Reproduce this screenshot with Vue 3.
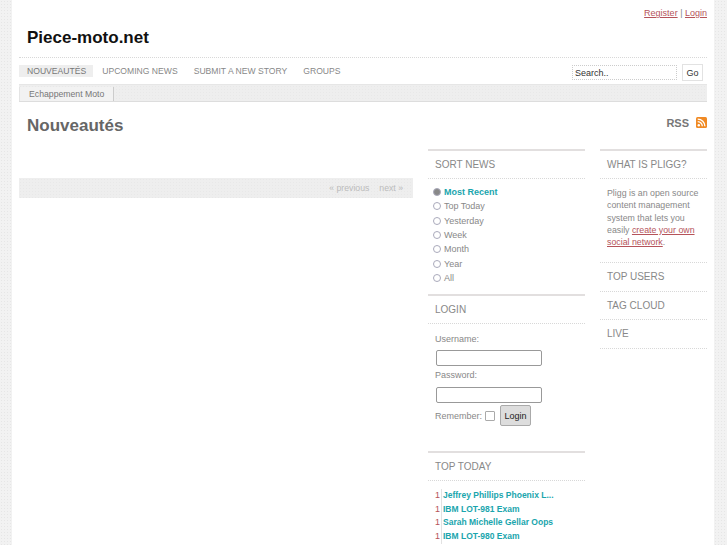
<script setup>
const sorts = ['Top Today', 'Yesterday', 'Week', 'Month', 'Year', 'All']
const nav = ['Upcoming News', 'Submit a new story', 'Groups']
const top = ['Jeffrey Phillips Phoenix L...', 'IBM LOT-981 Exam', 'Sarah Michelle Gellar Oops', 'IBM LOT-980 Exam']
</script>

<template>
  <div class="page">
    <div class="header">
      <div class="userlinks"><a>Register</a> | <a>Login</a></div>
      <div class="logo">Piece-moto.net</div>
    </div>

    <div class="nav">
      <span class="nav__item nav__item--on">Nouveautés</span>
      <span class="nav__item" v-for="n in nav" :key="n">{{ n }}</span>
      <div class="search">
        <input class="search__field" type="text" value="Search.." />
        <button class="search__btn">Go</button>
      </div>
    </div>

    <div class="subnav"><span class="subnav__tab">Echappement Moto</span></div>

    <div class="title">
      <h1>Nouveautés</h1>
      <div class="rss">
        RSS
        <svg width="11" height="11" viewBox="0 0 11 11">
          <rect width="11" height="11" rx="1.5" fill="#f08a24" />
          <circle cx="2.8" cy="8.2" r="1.2" fill="#fff" />
          <path d="M1.7 4.7a4.6 4.6 0 0 1 4.6 4.6M1.7 2.1a7.2 7.2 0 0 1 7.2 7.2" fill="none" stroke="#fff" stroke-width="1.3" />
        </svg>
      </div>
    </div>

    <div class="columns">
      <div class="main">
        <div class="pager"><span>« previous</span><span>next »</span></div>
      </div>

      <div class="side">
        <div class="box">
          <h2>Sort News</h2>
          <ul class="sort">
            <li class="sort__on"><i class="radio radio--on"></i>Most Recent</li>
            <li v-for="s in sorts" :key="s"><i class="radio"></i>{{ s }}</li>
          </ul>
        </div>

        <div class="box">
          <h2>Login</h2>
          <div class="login">
            <label>Username:</label>
            <input class="login__field login__field--first" type="text" />
            <label>Password:</label>
            <input class="login__field" type="password" />
            <div class="login__row">
              <label>Remember:</label>
              <i class="check"></i>
              <button class="login__btn">Login</button>
            </div>
          </div>
        </div>

        <div class="box">
          <h2>Top Today</h2>
          <ul class="top">
            <li v-for="t in top" :key="t"><span class="top__num">1</span><a>{{ t }}</a></li>
          </ul>
        </div>
      </div>

      <div class="side">
        <div class="box">
          <h2>What is Pligg?</h2>
          <p class="about">Pligg is an open source content management system that lets you easily <a>create your own social network</a>.</p>
        </div>
        <div class="box box--flat"><h2>Top Users</h2></div>
        <div class="box box--flat"><h2>Tag Cloud</h2></div>
        <div class="box box--flat"><h2>Live</h2></div>
      </div>
    </div>
  </div>
</template>

<style scoped>
.page {
  width: 688px;
  height: 545px;
  overflow: hidden;
  margin-left: 12px;
  padding: 0 7px;
  background: #fff;
  font-family: "Liberation Sans", Arial, sans-serif;
  font-size: 9px;
  color: #888;
}

.header {
  height: 57px;
  border-bottom: 1px dotted #d8d8d8;
}

.userlinks {
  text-align: right;
  padding-top: 8px;
  font-size: 9px;
  line-height: 10px;
}

.userlinks a,
.about a {
  color: #b5535a;
  text-decoration: underline;
}

.logo {
  margin: 8px 0 0 8px;
  font-size: 17px;
  font-weight: bold;
  line-height: 24px;
  color: #111;
}

.nav {
  display: flex;
  align-items: flex-start;
  height: 26px;
  padding-top: 7px;
  box-sizing: border-box;
}

.nav__item {
  height: 12px;
  line-height: 12px;
  padding: 0 7px 0 8px;
  margin-right: 1px;
  text-transform: uppercase;
  font-size: 8.6px;
  color: #888;
}

.nav__item--on {
  background: #eee;
  color: #777;
}

.search {
  margin-left: auto;
  margin-top: -1px;
  display: flex;
  align-items: center;
  margin-right: 4px;
}

.search__field {
  width: 105px;
  height: 15px;
  box-sizing: border-box;
  border: 1px dotted #ccc;
  padding: 0 2px;
  font: 9px "Liberation Sans", Arial, sans-serif;
  color: #333;
  outline: none;
}

.search__btn {
  width: 21px;
  height: 17px;
  margin-left: 5px;
  padding: 0;
  border: 1px solid #e2e2e2;
  background: #fff;
  font: 9px "Liberation Sans", Arial, sans-serif;
  color: #333;
}

.subnav {
  height: 18px;
  box-sizing: border-box;
  padding-top: 2px;
  border-top: 1px solid #e6e6e6;
  border-bottom: 1px solid #ddd;
  background-color: #eee;
  background-image: radial-gradient(#e8e8e8 0.6px, transparent 0.7px);
  background-size: 3px 3px;
  display: flex;
}

.subnav__tab {
  width: 95px;
  box-sizing: border-box;
  padding-left: 9px;
  background: #f2f2f2;
  border-left: 1px solid #e4e4e4;
  border-right: 1px solid #ccc;
  line-height: 14px;
  font-size: 8.7px;
  color: #777;
}

.title {
  display: flex;
  justify-content: space-between;
  padding: 14px 0 0 8px;
  height: 47px;
  box-sizing: border-box;
}

.title h1 {
  margin: 0;
  font-size: 17px;
  line-height: 20px;
  color: #666;
}

.rss {
  display: flex;
  gap: 7px;
  margin-top: -1px;
  font-size: 11px;
  font-weight: bold;
  line-height: 16px;
  color: #777;
}

.rss svg {
  margin-top: 2px;
}

.columns {
  display: grid;
  grid-template-columns: 394px 157px 107px;
  column-gap: 15px;
}

.main {
  padding-top: 29px;
}

.pager {
  display: flex;
  justify-content: flex-end;
  gap: 10px;
  height: 20px;
  padding-right: 10px;
  background-color: #eee;
  background-image: radial-gradient(#e8e8e8 0.6px, transparent 0.7px);
  background-size: 3px 3px;
  font-size: 8.7px;
  line-height: 20px;
  color: #bbb;
}

.box {
  border-top: 2px solid #e2dfdf;
}

.box h2 {
  margin: 0;
  height: 28px;
  box-sizing: border-box;
  padding-left: 7px;
  border-bottom: 1px dotted #d8d8d8;
  font-size: 10px;
  font-weight: normal;
  line-height: 27px;
  text-transform: uppercase;
  color: #888;
}

.box--flat {
  border-top: 0;
}

.box--flat h2 {
  height: 28.5px;
}

.sort {
  list-style: none;
  margin: 0;
  padding: 6px 0 9px 5px;
}

.sort li {
  display: flex;
  align-items: center;
  height: 14.3px;
}

.sort__on {
  font-weight: bold;
  color: #1aa5ad;
}

.radio {
  width: 6px;
  height: 6px;
  margin-right: 3px;
  border: 1px solid #aab;
  border-radius: 50%;
}

.radio--on {
  background: #888;
}

.login {
  display: flex;
  flex-direction: column;
  padding: 9px 0 25px 7px;
}

.login label {
  line-height: 12px;
}

.login__field {
  width: 106px;
  height: 16px;
  box-sizing: border-box;
  margin: 6px 0 3px 1px;
  border: 1px solid #999;
  border-radius: 2px;
}

.login__field--first {
  margin-top: 5px;
}

.login__row {
  display: flex;
  align-items: center;
  margin-top: -1px;
}

.check {
  width: 8px;
  height: 8px;
  margin: 0 5px 0 3px;
  border: 1px solid #aaa;
  border-radius: 1px;
}

.login__btn {
  width: 31px;
  height: 21px;
  padding: 0;
  border: 1px solid #aaa;
  border-radius: 2px;
  background: #ddd;
  font: 9px "Liberation Sans", Arial, sans-serif;
  color: #222;
}

.top {
  list-style: none;
  margin: 0;
  padding: 8px 0 0 7px;
}

.top li {
  height: 13.7px;
  line-height: 13px;
  display: flex;
}

.top__num {
  width: 6px;
  border-right: 1px solid #e2e2e2;
  color: #b5535a;
}

.top a {
  padding-left: 1px;
  font-size: 8.5px;
  font-weight: bold;
  color: #1aa5ad;
}

.about {
  margin: 0;
  padding: 8px 0 14px 7px;
  border-bottom: 1px dotted #d8d8d8;
  font-size: 8.8px;
  line-height: 12.3px;
}
</style>

<style>
body {
  background-color: #f2f2f2;
  background-image: radial-gradient(#e6e6e6 0.6px, transparent 0.7px);
  background-size: 3px 3px;
}
</style>
